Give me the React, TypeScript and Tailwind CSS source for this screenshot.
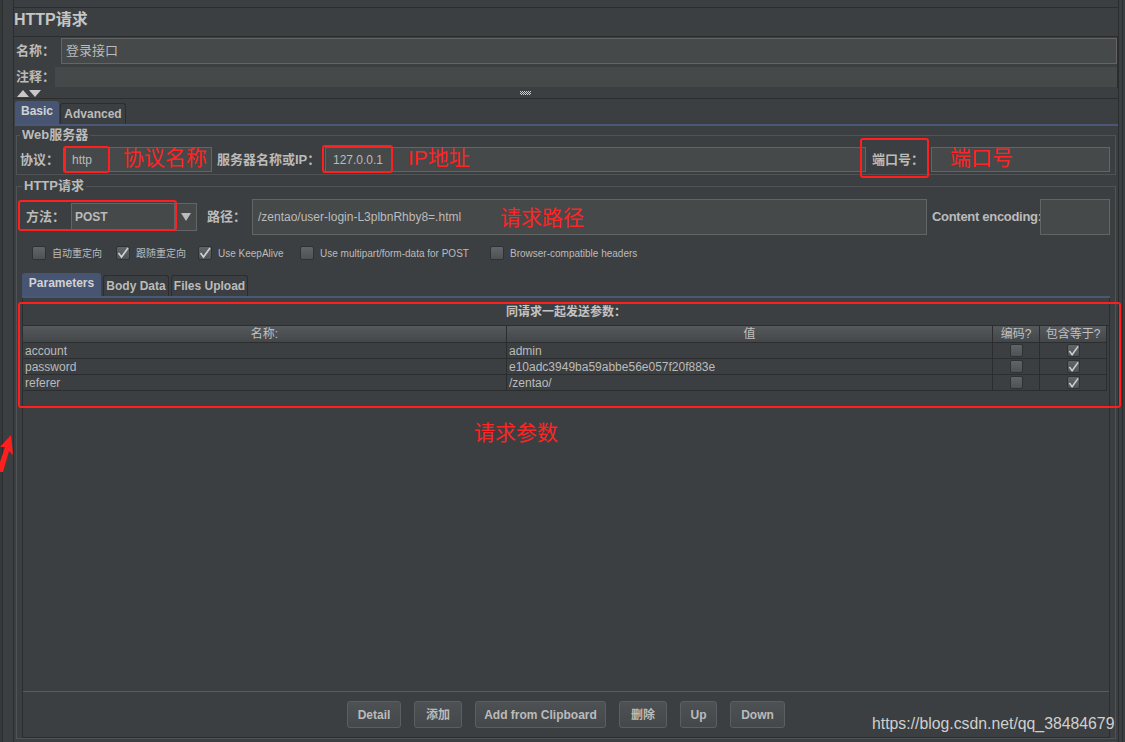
import type { ReactNode } from "react";

const redBox = "absolute rounded-[3px] border-2 border-[#ff1f1f]";
const redText = "absolute whitespace-nowrap text-[21px] leading-none text-[#ff2424]";

function Field({ className = "", children }: { className?: string; children?: ReactNode }) {
  return (
    <div className={"flex shrink-0 items-center border border-[#646464] bg-[#45494a] text-[12px] text-[#bbbbbb] " + className}>
      {children}
    </div>
  );
}

function Label({ className = "", children }: { className?: string; children: ReactNode }) {
  return <span className={"shrink-0 whitespace-nowrap text-[13px] font-bold text-[#bbbbbb] " + className}>{children}</span>;
}

function Tick() {
  return (
    <svg width="12" height="12" viewBox="0 0 12 12" fill="none">
      <path d="M1.5 6 L4.5 10 L11 1" stroke="#cfcfcf" strokeWidth="1.7" />
    </svg>
  );
}

function Box({ on, className = "h-[14px] w-[14px]" }: { on?: boolean; className?: string }) {
  return (
    <span
      className={
        "flex shrink-0 items-center justify-center rounded-[2px] border border-[#2f3234] bg-linear-to-b from-[#626567] to-[#4f5254] " +
        className
      }
    >
      {on && <Tick />}
    </span>
  );
}

function Tab({ active, className = "", children }: { active?: boolean; className?: string; children: ReactNode }) {
  return (
    <div
      className={
        (active
          ? "h-[23px] bg-[#475572] pb-[3px] text-[#d2d2d2]"
          : "h-[21px] border border-b-0 border-[#2b2d2f] bg-[#3c3f41] text-[#bbbbbb]") +
        " flex shrink-0 items-center justify-center rounded-t-[3px] text-[12px] font-bold " +
        className
      }
    >
      {children}
    </div>
  );
}

function Btn({ className = "", children }: { className?: string; children: ReactNode }) {
  return (
    <div
      className={
        "flex h-[27px] shrink-0 items-center justify-center rounded-[3px] border border-[#5c5f61] bg-linear-to-b from-[#4d5153] to-[#45484a] text-[12px] font-bold text-[#bbbbbb] " +
        className
      }
    >
      {children}
    </div>
  );
}

const checks = [
  { label: "自动重定向", on: false, w: "w-[84px]" },
  { label: "跟随重定向", on: true, w: "w-[82px]" },
  { label: "Use KeepAlive", on: true, w: "w-[102px]" },
  { label: "Use multipart/form-data for POST", on: false, w: "w-[190px]" },
  { label: "Browser-compatible headers", on: false, w: "w-[170px]" },
];

const params = [
  ["account", "admin"],
  ["password", "e10adc3949ba59abbe56e057f20f883e"],
  ["referer", "/zentao/"],
];

function ParamTable() {
  return (
    <div className="h-[366px] border-t border-[#2b2d2f]">
      <div className="grid grid-cols-[484px_486px_47px_67px]">
        {["名称:", "值", "编码?", "包含等于?"].map((h) => (
          <div
            key={h}
            className="flex h-[17px] items-center justify-center border-r border-b border-[#2b2d2f] bg-linear-to-b from-[#56595c] to-[#44474a] text-[12px] text-[#c0c0c0]"
          >
            {h}
          </div>
        ))}
        {params.map(([k, v]) => (
          <div key={k} className="contents">
            <div className="flex h-[16px] items-center border-r border-b border-[#2b2d2f] pl-[2px] text-[12px]">{k}</div>
            <div className="flex h-[16px] items-center border-r border-b border-[#2b2d2f] pl-[2px] text-[12px]">{v}</div>
            <div className="flex h-[16px] items-center justify-center border-r border-b border-[#2b2d2f]">
              <Box className="h-[13px] w-[13px]" />
            </div>
            <div className="flex h-[16px] items-center justify-center border-r border-b border-[#2b2d2f]">
              <Box on className="h-[13px] w-[13px]" />
            </div>
          </div>
        ))}
      </div>
    </div>
  );
}

function BasicPane() {
  return (
    <div className="ml-[1px] flex-1">
      <fieldset className="mt-[2px] ml-[1px] w-[1100px] border border-[#505355] pb-[2px] pl-[3px]">
        <legend className="px-[2px] text-[13px] leading-[14px] font-bold text-[#bbbbbb]">Web服务器</legend>
        <div className="mt-[5px] flex h-[25px] items-center">
          <Label className="w-[45px]">协议：</Label>
          <Field className="h-[25px] w-[147px] pl-[6px]">http</Field>
          <Label className="ml-[5px] w-[104px]">服务器名称或IP：</Label>
          <Field className="ml-[4px] h-[25px] w-[541px] pl-[7px]">127.0.0.1</Field>
          <Label className="ml-[6px] w-[59px]">端口号：</Label>
          <Field className="h-[25px] w-[179px]" />
        </div>
      </fieldset>

      <fieldset className="mt-[4px] ml-[1px] w-[1100px] border border-[#505355] pl-[5px]">
        <legend className="px-[2px] text-[13px] leading-[14px] font-bold text-[#bbbbbb]">HTTP请求</legend>
        <div className="mt-[6px] flex h-[36px] items-center pl-[4px]">
          <Label className="w-[45px]">方法：</Label>
          <Field className="h-[28px] w-[104px] pl-[3px] font-bold">POST</Field>
          <div className="flex h-[28px] w-[22px] shrink-0 items-center justify-center border border-[#646464] bg-[#45494a]">
            <svg width="10" height="8" viewBox="0 0 10 8">
              <path d="M0 0 H10 L5 8Z" fill="#bbbbbb" />
            </svg>
          </div>
          <Label className="ml-[10px] w-[45px]">路径：</Label>
          <Field className="h-[36px] w-[675px] pl-[5px]">/zentao/user-login-L3plbnRhby8=.html</Field>
          <Label className="ml-[5px] w-[108px] text-[11.5px] tracking-[-0.3px]">Content encoding:</Label>
          <Field className="h-[36px] w-[70px]" />
        </div>

        <div className="mt-[10px] flex h-[16px] items-center pl-[10px]">
          {checks.map((c) => (
            <div key={c.label} className={"flex items-center gap-[6px] " + c.w}>
              <Box on={c.on} />
              <span className="whitespace-nowrap text-[10px] text-[#bbbbbb]">{c.label}</span>
            </div>
          ))}
        </div>

        <div className="mt-[11px] flex h-[24px] items-end gap-[2px]">
          <Tab active className="w-[79px]">Parameters</Tab>
          <Tab className="w-[66px]">Body Data</Tab>
          <Tab className="w-[77px]">Files Upload</Tab>
        </div>
        <div className="h-[2px] w-[1088px] bg-[#4a5877]" />

        <div className="h-[440px] w-[1088px] border-x border-b border-[#2b2d2f]">
          <div className="flex h-[27px] items-center justify-center text-[12px] font-bold text-[#c4c4c4]">
            同请求一起发送参数：
          </div>
          <ParamTable />
          <div className="flex h-[46px] justify-center gap-[13px] border-t border-[#5a5d5f] pt-[9px]">
            <Btn className="w-[54px]">Detail</Btn>
            <Btn className="w-[48px]">添加</Btn>
            <Btn className="w-[131px]">Add from Clipboard</Btn>
            <Btn className="w-[48px]">删除</Btn>
            <Btn className="w-[37px]">Up</Btn>
            <Btn className="w-[55px]">Down</Btn>
          </div>
        </div>
      </fieldset>
    </div>
  );
}

export default function App() {
  return (
    <div className="relative flex h-[742px] w-[1125px] overflow-hidden bg-[#3c3f41] font-['Liberation_Sans','Noto_Sans_CJK_SC',sans-serif] text-[12px] text-[#bbbbbb]">
      <div className="flex h-full w-[14px] shrink-0">
        <div className="w-[2px] bg-[#36393b]" />
        <div className="w-[1px] bg-[#2b2d2f]" />
        <div className="flex-1" />
        <div className="w-[1px] bg-[#2b2d2f]" />
      </div>

      <main className="flex w-[1104px] shrink-0 flex-col pt-[7px]">
        <div className="h-[29px] border-t border-[#2b2d2f] text-[16px] leading-[24px] font-bold text-[#c6c6c6]">
          HTTP请求
        </div>

        <div className="flex h-[52px] flex-col border-t border-r border-[#2b2d2f]">
          <div className="mt-[1px] flex h-[26px] items-center">
            <Label className="w-[47px] pl-[2px]">名称：</Label>
            <Field className="h-[26px] flex-1 pl-[4px] text-[13px]">登录接口</Field>
          </div>
          <div className="mt-[3px] flex h-[20px] items-center">
            <Label className="w-[41px] pl-[2px]">注释：</Label>
            <div className="h-[20px] flex-1 bg-[#45494a]" />
          </div>
        </div>

        <div className="flex h-[11px] items-center border-b border-[#2b2d2f] pl-[3px]">
          <svg width="24" height="7" viewBox="0 0 24 7">
            <path d="M0 7 L6 0 L12 7Z" fill="#c8c8c8" />
            <path d="M12 0 H24 L18 7Z" fill="#c8c8c8" />
          </svg>
          <svg className="ml-[479px]" width="11" height="4" viewBox="0 0 11 4">
            {[0, 2, 4, 6, 8, 10].map((x) => (
              <rect key={x} x={x} y="0" width="1" height="1" fill="#d0d0d0" />
            ))}
            {[1, 3, 5, 7, 9].map((x) => (
              <rect key={x} x={x} y="1" width="1" height="1" fill="#d0d0d0" />
            ))}
            {[0, 2, 4, 6, 8, 10].map((x) => (
              <rect key={x} x={x} y="2" width="1" height="1" fill="#d0d0d0" />
            ))}
            {[1, 3, 5, 7, 9].map((x) => (
              <rect key={x} x={x} y="3" width="1" height="1" fill="#d0d0d0" />
            ))}
          </svg>
        </div>

        <div className="flex h-[25px] items-end gap-[1px] pl-[1px]">
          <Tab active className="w-[44px]">Basic</Tab>
          <Tab className="w-[66px]">Advanced</Tab>
        </div>
        <div className="ml-[1px] h-[2px] bg-[#4a5877]" />

        <BasicPane />
      </main>

      <div className="flex h-full w-[7px] shrink-0">
        <div className="w-[1px] bg-[#2b2d2f]" />
        <div className="w-[3px]" />
        <div className="w-[1px] bg-[#2b2d2f]" />
      </div>

      {/* red annotations drawn over the screenshot */}
      <div className={redBox + " top-[146px] left-[63px] h-[27px] w-[47px]"} />
      <div className={redBox + " top-[145px] left-[322px] h-[28px] w-[71px]"} />
      <div className={redBox + " top-[138px] left-[860px] h-[40px] w-[69px]"} />
      <div className={redBox + " top-[200px] left-[18px] h-[31px] w-[159px]"} />
      <div className={redBox + " top-[302px] left-[18px] h-[106px] w-[1103px]"} />
      <span className={redText + " top-[147px] left-[123px]"}>协议名称</span>
      <span className={redText + " top-[147px] left-[408px]"}>IP地址</span>
      <span className={redText + " top-[147px] left-[950px]"}>端口号</span>
      <span className={redText + " top-[207px] left-[500px]"}>请求路径</span>
      <span className={redText + " top-[422px] left-[474px]"}>请求参数</span>
      <svg className="absolute top-[432px] left-0" width="14" height="42" viewBox="0 0 14 42">
        <path d="M11 3 L13 23 L9 19 L3 40 L0 40 L0 30 L5 15 L0 15Z" fill="#ff1f1f" />
      </svg>

      <span className="absolute top-[712px] left-[872px] text-[15.8px] whitespace-nowrap text-[#cfcfcf]">
        https://blog.csdn.net/qq_38484679
      </span>
    </div>
  );
}
